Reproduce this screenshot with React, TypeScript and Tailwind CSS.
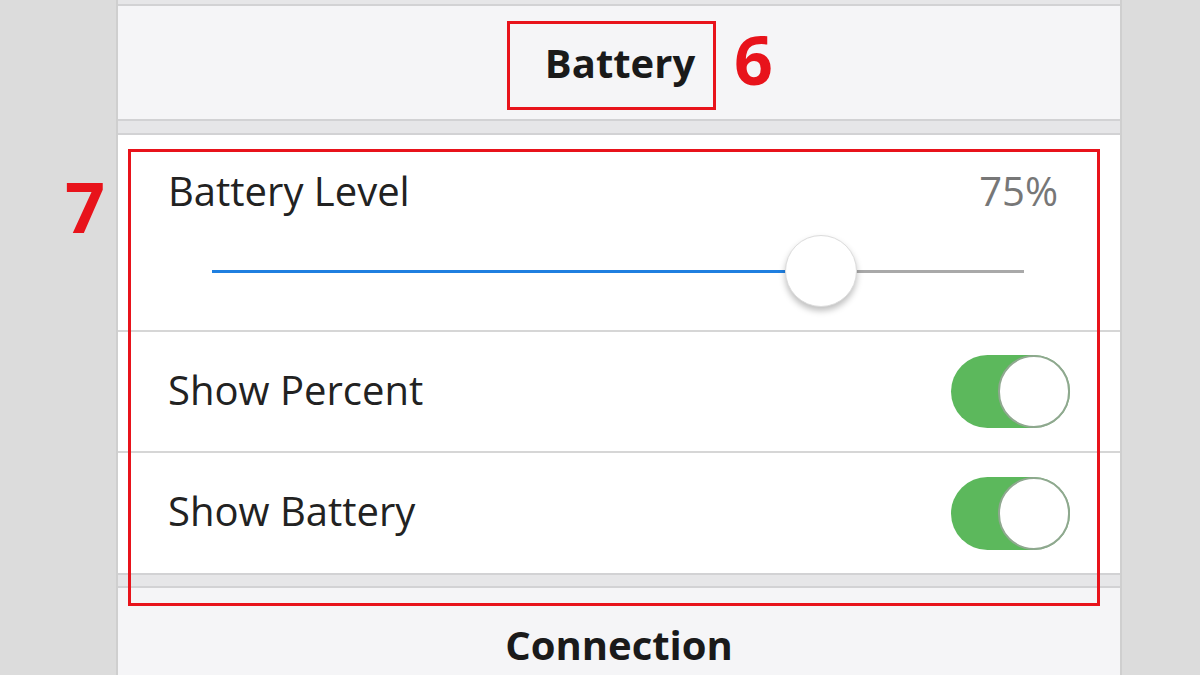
import React from "react";

const font = { fontFamily: '"Open Sans", "Noto Sans", sans-serif' };

function Toggle() {
  return (
    <div className="relative w-[119px] h-[73px] rounded-full bg-[#5cb85c]">
      <div className="absolute right-0 top-0 w-[72px] h-[73px] rounded-full bg-white border-2 border-[#8fa88f]" />
    </div>
  );
}

export default function App() {
  return (
    <div className="relative w-[1200px] h-[675px] overflow-hidden bg-[#dcdcdc] pl-[116px]" style={font}>
      <div className="w-[1006px] h-full flex flex-col border-x-2 border-[#cfcfcf] bg-[#f5f5f7]">
        <div className="h-[6px] bg-[#e6e6e8] border-b-2 border-[#d2d2d4]" />
        <div className="h-[118px] flex items-center justify-center border-b-2 border-[#d2d2d4]">
          <span className="text-[40px] font-bold text-[#1a1a1a] ml-[2px]">Battery</span>
        </div>
        <div className="h-[14px] bg-[#e6e6e8] border-b-2 border-[#d2d2d4]" />
        <div className="bg-white flex flex-col">
          <div className="h-[197px] border-b-2 border-[#d6d6d6] flex flex-col pl-[50px] pr-[62px]">
            <div className="flex justify-between items-baseline pt-[26px]">
              <span className="text-[40px] text-[#222] leading-[60px]">Battery Level</span>
              <span className="text-[40px] text-[#777] leading-[60px]">75%</span>
            </div>
            <div className="relative mt-[14px] ml-[44px] mr-[34px] h-[72px] flex items-center">
              <div className="h-[3px] w-[75%] bg-[#1f7fe0]" />
              <div className="h-[3px] flex-1 bg-[#a9a9a9]" />
              <div
                className="absolute top-0 w-[72px] h-[72px] rounded-full bg-white border border-[#dcdcdc] shadow-[0_4px_6px_rgba(0,0,0,0.25)]"
                style={{ left: "calc(75% - 36px)" }}
              />
            </div>
          </div>
          <div className="h-[121px] border-b-2 border-[#d6d6d6] flex items-center justify-between pl-[50px] pr-[50px]">
            <span className="text-[40px] text-[#222] -mt-[4px]">Show Percent</span>
            <Toggle />
          </div>
          <div className="h-[122px] border-b-2 border-[#d2d2d4] flex items-center justify-between pl-[50px] pr-[50px]">
            <span className="text-[40px] text-[#222] -mt-[4px]">Show Battery</span>
            <Toggle />
          </div>
        </div>
        <div className="h-[13px] bg-[#e6e6e8] border-b-2 border-[#d2d2d4]" />
        <div className="flex-1 flex justify-center">
          <span className="text-[40px] font-bold text-[#1a1a1a] mt-[27px]">Connection</span>
        </div>
      </div>

      <div className="absolute left-[507px] top-[21px] w-[209px] h-[89px] border-[3px] border-[#e8131b]" />
      <span className="absolute left-[734px] top-[14px] text-[68px] font-bold text-[#e8131b]" style={{ lineHeight: "90px" }}>6</span>
      <div className="absolute left-[128px] top-[149px] w-[972px] h-[457px] border-[3px] border-[#e8131b]" />
      <span className="absolute left-[65px] top-[161px] text-[70px] font-bold text-[#e8131b]" style={{ lineHeight: "90px" }}>7</span>
    </div>
  );
}
